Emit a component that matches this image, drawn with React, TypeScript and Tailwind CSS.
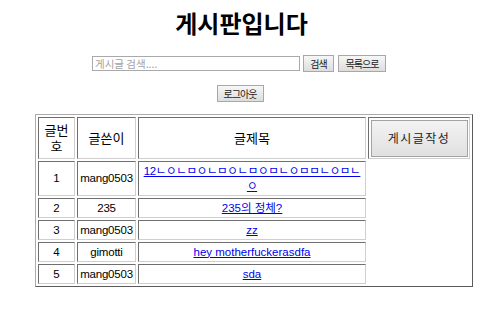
type Post = { id: number; writer: string; title: string };

const posts: Post[] = [
  { id: 1, writer: "mang0503", title: "12ㄴㅇㄴㅁㅇㄴㅁㅇㄴㅁㅇㅁㄴㅇㅁㅁㄴㅇㅁㄴㅇ" },
  { id: 2, writer: "235", title: "235의 정체?" },
  { id: 3, writer: "mang0503", title: "zz" },
  { id: 4, writer: "gimotti", title: "hey motherfuckerasdfa" },
  { id: 5, writer: "mang0503", title: "sda" },
];

const cell =
  "border border-t-[#6f6f6f] border-l-[#6f6f6f] border-b-[#cfcfcf] border-r-[#cfcfcf] p-px text-center align-middle";

const head = `${cell} font-normal text-[13px] leading-[16px] [font-family:'Noto_Sans_CJK_KR',sans-serif]`;

const smallBtn =
  "flex items-center justify-center border border-[#a8a8a8] bg-linear-to-b from-[#f7f7f7] to-[#dddddd] text-[10px] tracking-[-1px] text-[#222]";

export default function App() {
  return (
    <div
      className="min-h-screen bg-white text-black"
      style={{ fontFamily: '"Noto Sans CJK KR", "Noto Sans", sans-serif' }}
    >
      <div className="pt-[7px]">
        <h1 className="text-center text-[24px] font-bold leading-[32px]">게시판입니다</h1>

        <div className="mt-[16px] flex h-[17px] items-center justify-center pr-[5px]">
          <input
            className="h-[15px] w-[208px] border border-[#a9a9a9] px-[2px] text-[10.5px] text-black outline-none placeholder:text-[#a3a3a3]"
            placeholder="게시글 검색...."
          />
          <button className={`${smallBtn} ml-[3px] h-[17px] w-[31px]`}>검색</button>
          <button className={`${smallBtn} ml-[4px] h-[17px] w-[48px]`}>목록으로</button>
        </div>

        <div className="mt-[13px] flex justify-center pr-[3px]">
          <button className={`${smallBtn} h-[17px] w-[47px]`}>로그아웃</button>
        </div>

        <table
          className="ml-[35px] mt-[12px] w-[438px] table-fixed border-separate border-spacing-[2px] border border-t-[#ababab] border-l-[#ababab] border-b-[#5a5a5a] border-r-[#5a5a5a] text-[11.5px] leading-[15px]"
          style={{ fontFamily: '"Liberation Sans", "Noto Sans CJK KR", sans-serif' }}
        >
          <colgroup>
            <col className="w-[37px]" />
            <col className="w-[59px]" />
            <col className="w-[228px]" />
            <col className="w-[102px]" />
          </colgroup>
          <thead>
            <tr>
              <th className={`${head} h-[42px] px-[3px]`}>글번호</th>
              <th className={head}>글쓴이</th>
              <th className={head}>글제목</th>
              <th className={head}>
                <button className="mx-auto flex h-[37px] w-[97px] items-center justify-center border border-[#a3a3a3] bg-linear-to-b from-[#f3f3f3] to-[#e0e0e0] text-[12px] tracking-[1.5px] text-[#222]">
                  게시글작성
                </button>
              </th>
            </tr>
          </thead>
          <tbody>
            {posts.map((p) => (
              <tr key={p.id}>
                <td className={`${cell} ${p.id === 1 ? "h-[35px]" : "h-[20px]"}`}>{p.id}</td>
                <td className={`${cell} tracking-[-0.2px]`}>{p.writer}</td>
                <td className={cell}>
                  <a
                    href="#"
                    className={`text-[#0000ee] underline ${p.id === 1 ? "tracking-[-0.35px]" : ""}`}
                  >
                    {p.title}
                  </a>
                </td>
              </tr>
            ))}
          </tbody>
        </table>
      </div>
    </div>
  );
}
